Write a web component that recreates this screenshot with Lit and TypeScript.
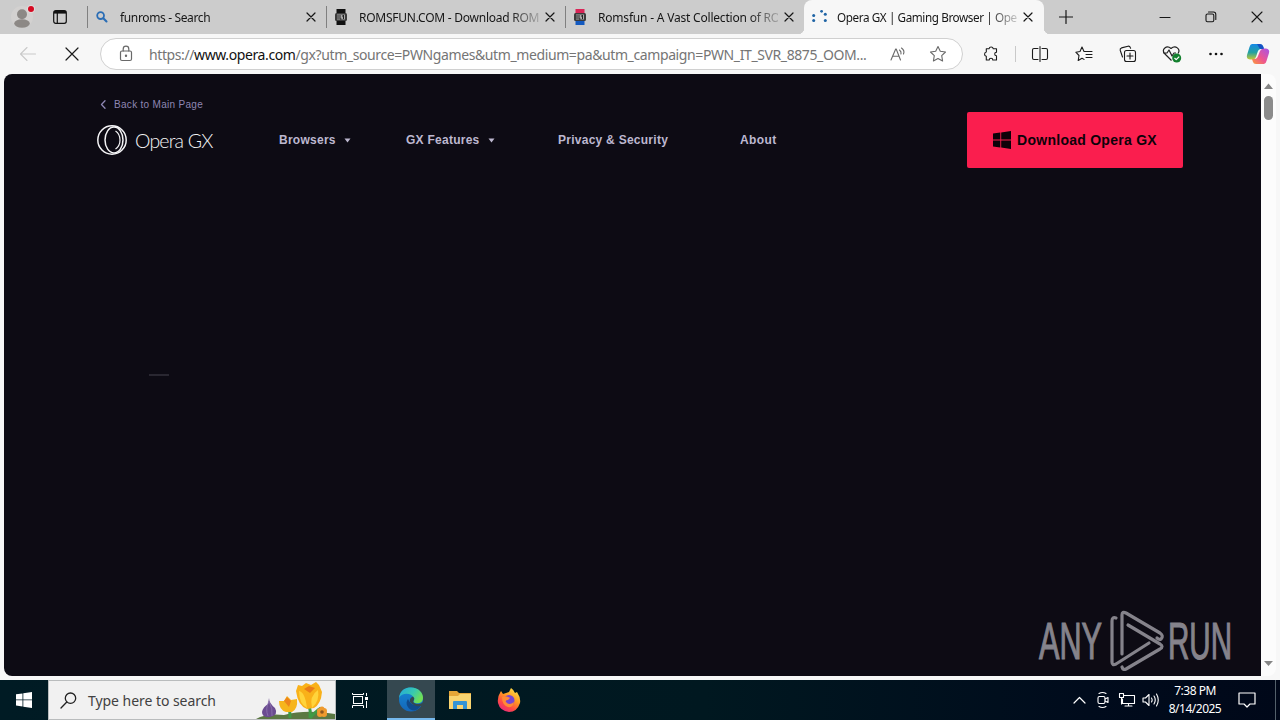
import { LitElement, html, css, svg } from "lit";
import { customElement } from "lit/decorators.js";
import { classMap } from "lit/directives/class-map.js";

const line = (w: number, h: number, body: unknown, sw = 1.1) => html`<svg width=${w} height=${h} viewBox="0 0 ${w} ${h}" fill="none" stroke="currentColor" stroke-width=${sw} stroke-linecap="round" stroke-linejoin="round">${body}</svg>`;

const cross = line(10, 10, svg`<path d="M1 1 9 9M9 1 1 9"/>`, 1.2);

const favicons: Record<string, unknown> = {
  search: line(14, 14, svg`<circle cx="5.6" cy="5.6" r="3.4" stroke="#2a6db5" stroke-width="1.8"/><path d="M8.3 8.3 11.5 11.5" stroke="#2a6db5" stroke-width="2.1"/>`),
  dark: html`<svg width="14" height="16" viewBox="0 0 14 16"><path d="M2.500 0h9v5h-9zM2.500 11h9v5h-9z" fill="#111"/><rect x="1" y="4" width="12" height="8" rx="1.5" fill="#3c3c3c"/><rect x="3" y="5.5" width="8" height="5" fill="#aaa"/><path d="M4 6v4M6 6v4h1.5M9.5 6v4M8 7h2" stroke="#222" fill="none"/></svg>`,
  color: html`<svg width="14" height="16" viewBox="0 0 14 16"><path d="M2.500 0h9v5h-9z" fill="#d92557"/><path d="M2.500 11h9v5h-9z" fill="#145ac0"/><rect x="1" y="4" width="12" height="8" rx="1.500" fill="#3c3c3c"/><rect x="3" y="5.500" width="8" height="5" fill="#aaa"/><path d="M4 6v4M6 6v4h1.500M9.500 6v4M8 7h2" stroke="#222" fill="none"/></svg>`,
  loading: html`<svg width="18" height="16" viewBox="0 0 18 16" fill="#1f64a5"><circle cx="1.700" cy="6.400" r="1.500"/><circle cx="1.700" cy="11.600" r="1.500"/><circle cx="9.600" cy="2.300" r="1.400"/><circle cx="13.300" cy="5.200" r="1.500"/><circle cx="13.300" cy="11.600" r="1.500"/></svg>`,
};

const ICONS = {
  puzzle: line(18, 18, svg`<path d="M6 3.800A2.200 2.200 0 0 1 10.300 3.800H13.500V7.200A1.800 1.800 0 0 0 13.500 10.800V15H9.800A1.800 1.800 0 0 0 6.200 15H3.300V11.300A2.200 2.200 0 0 1 3.300 7V3.800Z"/>`),
  split: line(18, 18, svg`<path d="M7 3.500H3A1.500 1.500 0 0 0 1.500 5V13A1.500 1.500 0 0 0 3 14.500H7M11 3.500H15A1.500 1.500 0 0 1 16.500 5V13A1.500 1.500 0 0 1 15 14.500H11M9 1.500V16.500"/>`),
  favorites: line(18, 18, svg`<path d="M11 6.500H9L7 2 5 6.500 .8 7.200 4 10.500 3.200 15.500 7 13.200 9 14.400M11.500 6.500H17M11 9.500H17M11 12.500H17"/>`),
  collections: line(18, 18, svg`<rect x="5.500" y="5.500" width="11" height="11" rx="2"/><path d="M11 8V14M8 11H14M3.500 12 1.200 5.200Q.8 3.500 2.500 2.900L9 1.200Q10.700 .9 11.300 2.500L11.600 3.200"/>`),
  health: html`<svg width="20" height="18" viewBox="0 0 20 18" fill="none" stroke="#222" stroke-width="1.200" stroke-linejoin="round"><path d="M9.500 15.500 2.500 8.500C-.7 4.500 4.500-.3 9 3.500 13.500-.3 19 4 16 8.500M1 8H5L7 5 10 11 12 8H14"/><circle cx="14.700" cy="13" r="4.500" fill="#13802e" stroke="none"/><path d="M12.500 13 14.200 14.700 17.200 11.600" stroke="#fff"/></svg>`,
  more: html`<svg width="18" height="18" viewBox="0 0 18 18" fill="#111"><circle cx="3.500" cy="9" r="1.300"/><circle cx="9" cy="9" r="1.300"/><circle cx="14.500" cy="9" r="1.300"/></svg>`,
};

@customElement("browser-tabs")
class BrowserTabs extends LitElement {
  static styles = css`
    :host { display: flex; height: 34px; background: #cccccc; color: #161616; font: 12px "Noto Sans", "Open Sans", sans-serif; }
    svg { display: block; flex: none; }
    .lead { width: 87px; display: flex; align-items: center; padding-left: 11px; box-sizing: border-box; gap: 16px; }
    .tab { width: 239px; box-sizing: border-box; display: flex; align-items: center; border-left: 1px solid transparent; }
    .tab.rule { border-image: linear-gradient(#0000 20%, #808080 20% 80%, #0000 80%) 1; }
    .tab.on { width: 240px; background: #f7f7f7; border-radius: 8px 8px 0 0; position: relative; }
    .tab.on::before, .tab.on::after { content: ""; position: absolute; bottom: 0; width: 6px; height: 6px; }
    .tab.on::before { left: -7px; background: radial-gradient(circle at 0 0, #0000 6px, #f7f7f7 6.500px); }
    .tab.on::after { right: -6px; background: radial-gradient(circle at 100% 0, #0000 6px, #f7f7f7 6.500px); }
    .icon { width: 32px; display: flex; padding-left: 7px; box-sizing: border-box; }
    .title { width: 180px; white-space: nowrap; letter-spacing: var(--track); mask-image: linear-gradient(90deg, #000 84%, #0003); }
    .on .title { font-size: 11.700px; }
    .close { margin-left: 6px; }
    .plus { display: flex; align-items: center; width: 44px; justify-content: center; }
    .window { margin-left: auto; display: flex; align-items: center; }
    .window span { width: 46px; display: flex; justify-content: center; }
  `;
  tabs = [
    { icon: "search", title: "funroms - Search", track: -0.36 },
    { icon: "dark", title: "ROMSFUN.COM - Download ROM", track: -0.25 },
    { icon: "color", title: "Romsfun - A Vast Collection of RO", track: -0.2 },
    { icon: "loading", title: "Opera GX | Gaming Browser | Ope", track: -0.4 },
  ];
  render() {
    return html`
      <div class="lead">
        <svg width="26" height="26" viewBox="0 0 26 26"><circle cx="11" cy="13" r="11" fill="#d3d1d0"/><circle cx="11" cy="10.200" r="5" fill="#8c8885"/><ellipse cx="11" cy="19.500" rx="7.800" ry="4.200" fill="#8c8885"/><circle cx="20" cy="5" r="4" fill="#e2dad9"/><circle cx="20" cy="5" r="3" fill="#d50a22"/></svg>
        <svg width="14" height="14" viewBox="0 0 14 14" fill="none" stroke="#111" stroke-width="1.200"><rect x=".7" y=".7" width="12.600" height="12.600" rx="2"/><path d="M1 2.300H13" stroke-width="2.600"/><path d="M4.300 3V13"/></svg>
      </div>
      ${this.tabs.map((t, i) => html`<div class=${classMap({ tab: true, on: i === 3, rule: i < 3 })}>
        <span class="icon">${favicons[t.icon]}</span><span class="title" style="--track:${t.track}px">${t.title}</span><span class="close">${cross}</span></div>`)}
      <div class="plus">${line(14, 14, svg`<path d="M7 .5V13.500M.5 7H13.500"/>`, 1.2)}</div>
      <div class="window">
        <span>${line(12, 12, svg`<path d="M1 6.500H11"/>`)}</span>
        <span>${line(12, 12, svg`<rect x="1" y="3" width="7.800" height="7.800" rx="1.500"/><path d="M3.500 1H8.500Q10.800 1 10.800 3.500V8.500"/>`)}</span>
        <span>${line(12, 12, svg`<path d="M1 1 11 11M11 1 1 11"/>`)}</span>
      </div>`;
  }
}

@customElement("browser-toolbar")
class BrowserToolbar extends LitElement {
  static styles = css`
    :host { display: flex; height: 40px; background: #f7f7f7; align-items: center; padding-left: 6px; box-sizing: border-box; color: #1b1b1b; }
    svg { display: block; flex: none; }
    .slot { width: 44px; display: flex; justify-content: center; flex: none; }
    .off { color: #c9c9c9; }
    .bar { margin-left: 6px; width: 863px; height: 32px; border: 1px solid #d0d0d0; border-radius: 16px; background: #fff; box-sizing: border-box; display: flex; align-items: center; color: #696969; }
    .lock { width: 48px; display: flex; justify-content: center; padding-left: 1px; box-sizing: border-box; }
    .url { width: 729px; white-space: nowrap; font: 14px "Noto Sans", "Open Sans", sans-serif; letter-spacing: -0.395px; color: #757575; }
    .url b { font-weight: 400; color: #111; }
    .bar .slot { width: 40px; }
    .puzzle { margin-left: 7px; }
    .rule { width: 1px; height: 16px; background: #c9c9c9; margin: 0 2px 0 1px; }
    .copilot { width: 40px; display: flex; justify-content: center; }
  `;
  render() {
    return html`
      <span class="slot off">${line(18, 16, svg`<path d="M16.500 8H1.500M8 1.500 1.500 8 8 14.500"/>`)}</span>
      <span class="slot">${line(14, 14, svg`<path d="M1 1 13 13M13 1 1 13"/>`, 1.2)}</span>
      <div class="bar">
        <span class="lock">${line(14, 18, svg`<rect x="1.500" y="6" width="11" height="9.500" rx="1.500"/><path d="M4.200 6V4A2.800 2.800 0 0 1 9.800 4V6"/><circle cx="7" cy="10.800" r=".6" fill="currentColor"/>`, 1.2)}</span>
        <span class="url">https://<b>www.opera.com</b>/gx?utm_source=PWNgames&amp;utm_medium=pa&amp;utm_campaign=PWN_IT_SVR_8875_OOM...</span>
        <span class="slot">${line(18, 16, svg`<path d="M2 14 6.700 3H7.200L11.500 14M3.700 10.200H10M10.500 4Q12.500 5.500 12 8M12.500 2Q16 4.500 14.500 8"/>`, 1.1)}</span>
        <span class="slot">${line(18, 18, svg`<path d="M9 1.500 11.300 6.200 16.500 7 12.700 10.700 13.600 16 9 13.500 4.400 16 5.300 10.700 1.500 7 6.700 6.200Z"/>`, 1.1)}</span>
      </div>
      <span class="slot puzzle">${ICONS.puzzle}</span><span class="rule"></span>
      <span class="slot">${ICONS.split}</span><span class="slot">${ICONS.favorites}</span><span class="slot">${ICONS.collections}</span><span class="slot">${ICONS.health}</span><span class="slot">${ICONS.more}</span>
      <span class="copilot"><svg width="24" height="22" viewBox="0 0 24 22">
        <defs><linearGradient id="a" x1="0" y1="0" x2="0" y2="1"><stop offset="0" stop-color="#1689e8"/><stop offset=".55" stop-color="#24a2a0"/><stop offset="1" stop-color="#c7c834"/></linearGradient>
        <linearGradient id="b" x1="1" y1="0" x2="0" y2="1"><stop offset="0" stop-color="#a653e8"/><stop offset=".55" stop-color="#ee5590"/><stop offset="1" stop-color="#fb9b39"/></linearGradient></defs>
        <path d="M6 1H14Q16.500 1 17.200 3.500L18 6H15Q12.500 6 11.600 9L10 14Q9 16.500 6 16.500H4Q0 16 1 12L3.500 4Q4.300 1 6 1Z" fill="url(#a)"/><path d="M11 1H14Q16.500 1 17.200 3.500L18 6H14Z" fill="#1752c4"/>
        <path d="M18 21H10Q7.500 21 6.800 18.500L6 16H8.500Q11 16 12 13L14 8Q15 5.500 18 5.500H20Q24 6 23 10L20.500 18Q19.700 21 18 21Z" fill="url(#b)"/></svg></span>`;
  }
}

@customElement("opera-page")
class OperaPage extends LitElement {
  static styles = css`
    :host { display: flex; height: 602px; margin: 0 4px; border-radius: 8px; overflow: hidden; background: #fcfcfc; position: relative; }
    svg { display: block; }
    .page { width: 1257px; background: #0d0b14; color: #bdb8d0; font-family: "Liberation Sans", Arial, sans-serif; padding: 24px 78px 0 93px; box-sizing: border-box; }
    .back { display: flex; align-items: center; height: 13px; gap: 7px; font-size: 10px; letter-spacing: 0.3px; color: #8d86b3; padding-left: 3px; }
    .head { display: flex; align-items: center; height: 56px; margin-top: 1px; }
    .brand { display: flex; align-items: center; width: 182px; gap: 7px; }
    .word { font: 300 19.500px Lato, sans-serif; color: #f4f4f6; letter-spacing: -0.8px; white-space: nowrap; }
    .item { display: flex; align-items: center; gap: 8px; font-size: 12px; font-weight: 700; letter-spacing: 0.26px; white-space: nowrap; }
    .browsers { width: 127px; }
    .features { width: 152px; }
    .privacy { width: 182px; }
    .about { letter-spacing: 0.38px; }
    .cta { margin-left: auto; width: 216px; height: 56px; border-radius: 2px; background: #fa1e4e; color: #0d0209; display: flex; align-items: center; justify-content: center; gap: 6px; font-size: 14px; font-weight: 700; letter-spacing: 0.26px; white-space: nowrap; }
    .dash { width: 20px; height: 2px; background: #292731; margin: 206px 0 0 52px; }
    .scroll { width: 15px; display: flex; flex-direction: column; align-items: center; padding: 8px 0 8px; box-sizing: border-box; }
    .thumb { width: 9px; height: 24px; border-radius: 5px; background: #8b8b8b; margin: 5px 0 auto; }
    .mark { position: absolute; right: 37px; bottom: 0; }
  `;
  caret = html`<svg width="7" height="5" viewBox="0 0 7 5"><path d="M.5 .5H6.500L3.500 4.500Z" fill="#bdb8d0"/></svg>`;
  render() {
    return html`
      <main class="page">
        <div class="back">${line(7, 9, svg`<path d="M5 .8 1.500 4.500 5 8.200"/>`, 1.3)}<span>Back to Main Page</span></div>
        <nav class="head">
          <div class="brand">
            <svg width="31" height="32" viewBox="0 0 31 32" fill="none" stroke="#f4f4f6" stroke-width="1.500"><circle cx="15" cy="16" r="14.200"/><ellipse cx="17" cy="16" rx="9" ry="13"/><path d="M18.500 7C24.500 11 24.500 21 18.500 25" stroke-width="1.200"/></svg>
            <span class="word">Opera GX</span>
          </div>
          <span class="item browsers">Browsers ${this.caret}</span>
          <span class="item features">GX Features ${this.caret}</span>
          <span class="item privacy">Privacy &amp; Security</span>
          <span class="item about">About</span>
          <div class="cta"><svg width="18" height="18" viewBox="0 0 18 18" fill="#0d0209"><path d="M0 2.600 7.300 1.600V8.500H0ZM8.200 1.400 18 0V8.500H8.200ZM0 9.400H7.300V16.400L0 15.400ZM8.200 9.400H18V18L8.200 16.600Z"/></svg>Download Opera GX</div>
        </nav>
        <div class="dash"></div>
      </main>
      <div class="scroll">
        <svg width="9" height="9" viewBox="0 0 9 9"><path d="M0 7 4.500 1.500 9 7Z" fill="#858585"/></svg>
        <span class="thumb"></span>
        <svg width="9" height="9" viewBox="0 0 9 9"><path d="M0 2 4.500 7 9 2Z" fill="#858585"/></svg>
      </div>
      <svg class="mark" width="202" height="70" viewBox="0 0 202 70" fill="#85838b">
        <g stroke="#85838b" stroke-width="1.200" font-family="Liberation Sans, Arial" font-size="52">
          <text x="2" y="53" textLength="63" lengthAdjust="spacingAndGlyphs">ANY</text>
          <text x="131" y="53" textLength="64" lengthAdjust="spacingAndGlyphs">RUN</text>
        </g>
        <g fill="none" stroke="#85838b" stroke-width="3.200" stroke-linejoin="round" stroke-linecap="round"><path d="M79 12Q75 10.500 75 15V56Q75 60 79 58L112 37"/><path d="M85 48V9Q85 5 89 7L123 27Q127 30 124 33Q122 34 120 32"/><path d="M91 19 123 38Q127 40.500 123 43L89 63Q86 64.500 85 61"/></g>
      </svg>`;
  }
}

@customElement("task-bar")
class TaskBar extends LitElement {
  static styles = css`
    :host { display: flex; height: 40px; background: linear-gradient(90deg, #001b24, #001820 55%, #000b1c 85%, #000819); color: #fff; font: 12px "Noto Sans", "Open Sans", sans-serif; }
    svg { display: block; flex: none; }
    .cell { width: 48px; display: flex; align-items: center; justify-content: center; box-sizing: border-box; }
    .active { background: #354850; border-bottom: 2px solid #76b9ed; }
    .files { padding-left: 2px; }
    .fox { padding-left: 4px; }
    .search { width: 288px; box-sizing: border-box; background: #f1f1f1; border: 1px solid #b9bcbd; display: flex; align-items: center; padding-left: 11px; gap: 11px; color: #414141; font-size: 14px; letter-spacing: -0.05px; white-space: nowrap; overflow: hidden; }
    .art { margin-left: auto; }
    .views { width: 51px; padding-right: 4px; }
    .tray { margin-left: auto; display: flex; align-items: center; }
    .tray .cell { width: 24px; }
    .clock { width: 64px; text-align: center; line-height: 18px; letter-spacing: -0.5px; }
    .tray .note { width: 40px; }
    .edge { width: 4px; height: 40px; border-left: 1px solid #53606a; margin-left: 8px; }
  `;
  render() {
    return html`
      <div class="cell"><svg width="16" height="16" viewBox="0 0 16 16" fill="#fff"><path d="M0 2.300 6.500 1.400V7.500H0ZM7.300 1.300 16 0V7.500H7.300ZM0 8.300H6.500V14.500L0 13.600ZM7.300 8.300H16V16L7.300 14.700Z"/></svg></div>
      <div class="search">
        ${line(17, 17, svg`<circle cx="10.500" cy="6.200" r="5.200" stroke="#222"/><path d="M6.800 10 1 16" stroke="#222"/>`, 1.3)}
        <span>Type here to search</span>
        <svg class="art" width="79" height="38" viewBox="0 0 79 38">
          <path d="M0 38Q10 32 28 34 50 28 79 33V38Z" fill="#5b7843"/>
          <path d="M54 37Q55 30 53 24M54 37Q60 30 65 27M34 37Q34 30 33 27" stroke="#3f9a45" stroke-width="3" fill="none"/>
          <path d="M13 17Q13 22 19 27 23 34 14 36 6 37 6 31 7 26 12 23Z" fill="#6b4c91"/><path d="M13 20Q9 28 12 35M13 20Q17 28 16 35" stroke="#947db5" stroke-width=".7" fill="none"/>
          <path d="M23 20 28 20 31 15 35 19 41 18Q42 28 36 31H30Q23 29 23 20Z" fill="#f6b51c"/><path d="M28 20 31 16 35 20 33 26Z" fill="#ed851b"/>
          <path d="M40 10 42 4 46 5 50 2 55 4 60 1 63 4 66 11Q65 23 58 27L51 28Q42 25 40 10Z" fill="#f9b119"/><path d="M43 10Q49 11 51 27Q43 23 43 10ZM62 9Q64 20 56 27 53 15 62 9Z" fill="#ffd43b"/><path d="M48 8 53 5 59 7 54 12Z" fill="#e97c18"/>
          <g fill="#ef9a2e"><circle cx="64" cy="30" r="3"/><circle cx="68" cy="30" r="3"/><circle cx="64" cy="33" r="3"/><circle cx="68" cy="33" r="3"/><circle cx="66" cy="28" r="2.500"/></g><circle cx="66" cy="31" r="1.800" fill="#8d5720"/>
        </svg>
      </div>
      <div class="cell views"><svg width="18" height="17" viewBox="0 0 18 17" fill="none" stroke="#fff"><rect x="2.500" y="4.500" width="9" height="7"/><path d="M1.500 1V2.500H12.500V1M1.500 16V13.500H12.500V16M15.500 1V4M15.500 9V16"/><path d="M14 5H17V8H14Z" fill="#fff" stroke="none"/></svg></div>
      <div class="cell active"><svg width="26" height="26" viewBox="0 0 26 26"><defs><linearGradient id="e" x1="0" y1="0" x2="1" y2=".5"><stop offset="0" stop-color="#22a6df"/><stop offset=".6" stop-color="#38c9af"/><stop offset="1" stop-color="#70df55"/></linearGradient><linearGradient id="f" x1="0" y1="0" x2="0" y2="1"><stop offset="0" stop-color="#1589d6"/><stop offset="1" stop-color="#1566b8"/></linearGradient></defs><circle cx="13" cy="13.500" r="12" fill="url(#f)"/><path d="M1 12C2 4 7 1.500 13 1.500 21 1.500 25 7 25 12 25 17 20 18 17 17 14 16 17 14 16 12 14 7 4 6 1 12Z" fill="url(#e)"/><path d="M10 13C6 18 11 25 17 24.500 21 23 23 20 23 18 17 21 12 18 10 13Z" fill="#114a8b"/><path d="M15 10.500Q17 12 16 14 14 16 17 17.500 20 18.500 23 17.500L25.500 16V20L23 20Q16 21 12 16 11 12 15 10.500Z" fill="#354850"/></svg></div>
      <div class="cell files"><svg width="24" height="22" viewBox="0 0 24 22"><path d="M1 3V2H9L11 4H23V20H1Z" fill="#e5a638"/><path d="M1 7H10L12 5H23V20H1Z" fill="#f9d470"/><path d="M5 20V13Q5 12 6 12H18Q19 12 19 13V20H15V16H9V20Z" fill="#3494d4"/></svg></div>
      <div class="cell fox"><svg width="24" height="24" viewBox="0 0 24 24"><defs><linearGradient id="g" x1=".8" y1="0" x2=".2" y2="1"><stop offset="0" stop-color="#ffe34b"/><stop offset=".4" stop-color="#ff9b22"/><stop offset=".7" stop-color="#ff4b43"/><stop offset="1" stop-color="#e32683"/></linearGradient></defs><path d="M4 3 6 6 9 5 12 4 14 0Q17 2 18 5L20 4Q24 10 23 15 20 24 12 24 3 23 1 15 0 9 4 3Z" fill="url(#g)"/><circle cx="12" cy="12.500" r="5.500" fill="#7846d1"/><path d="M5 9Q9 7 13 10L11 12Q8 12 9 14 12 18 17 14 16 20 11 19 5 17 5 9Z" fill="#ff8a35"/></svg></div>
      <div class="tray">
        <span class="cell">${line(13, 8, svg`<path d="M1 7 6.500 1.500 12 7"/>`, 1.2)}</span>
        <span class="cell">${line(14, 18, svg`<rect x="2" y="5.500" width="7" height="7" rx="1.500"/><path d="M9 8 12 6.500V11.500L9 10M3 2.500Q6.500 .5 10 2.500M3 15.500Q6.500 17.500 10 15.500"/>`)}</span>
        <span class="cell">${line(18, 16, svg`<path d="M6 3.500H16.500V11.500H4.500V7M10.500 11.500V14M7 14H14M1.500 1.500H5.500V5.500H1.500ZM3.500 5.500V12"/>`)}</span>
        <span class="cell">${line(18, 16, svg`<path d="M1 6H3.500L7 2.500V13.500L3.500 10H1ZM9.500 6Q10.800 8 9.500 10M12 4Q14.500 8 12 12M14.500 2Q18 8 14.500 14"/>`)}</span>
        <div class="clock">7:38 PM<br>8/14/2025</div>
        <span class="cell note">${line(18, 18, svg`<path d="M1 2H17V13H12L9 16 6 13H1Z"/>`, 1.2)}</span>
        <span class="edge"></span>
      </div>`;
  }
}

@customElement("app-root")
class AppRoot extends LitElement {
  static styles = css`
    :host { display: flex; flex-direction: column; width: 1280px; height: 720px; overflow: hidden; background: #f7f7f7; }
    .bottom { margin-top: 4px; }
  `;
  render() {
    return html`<browser-tabs></browser-tabs><browser-toolbar></browser-toolbar><opera-page></opera-page><task-bar class="bottom"></task-bar>`;
  }
}
